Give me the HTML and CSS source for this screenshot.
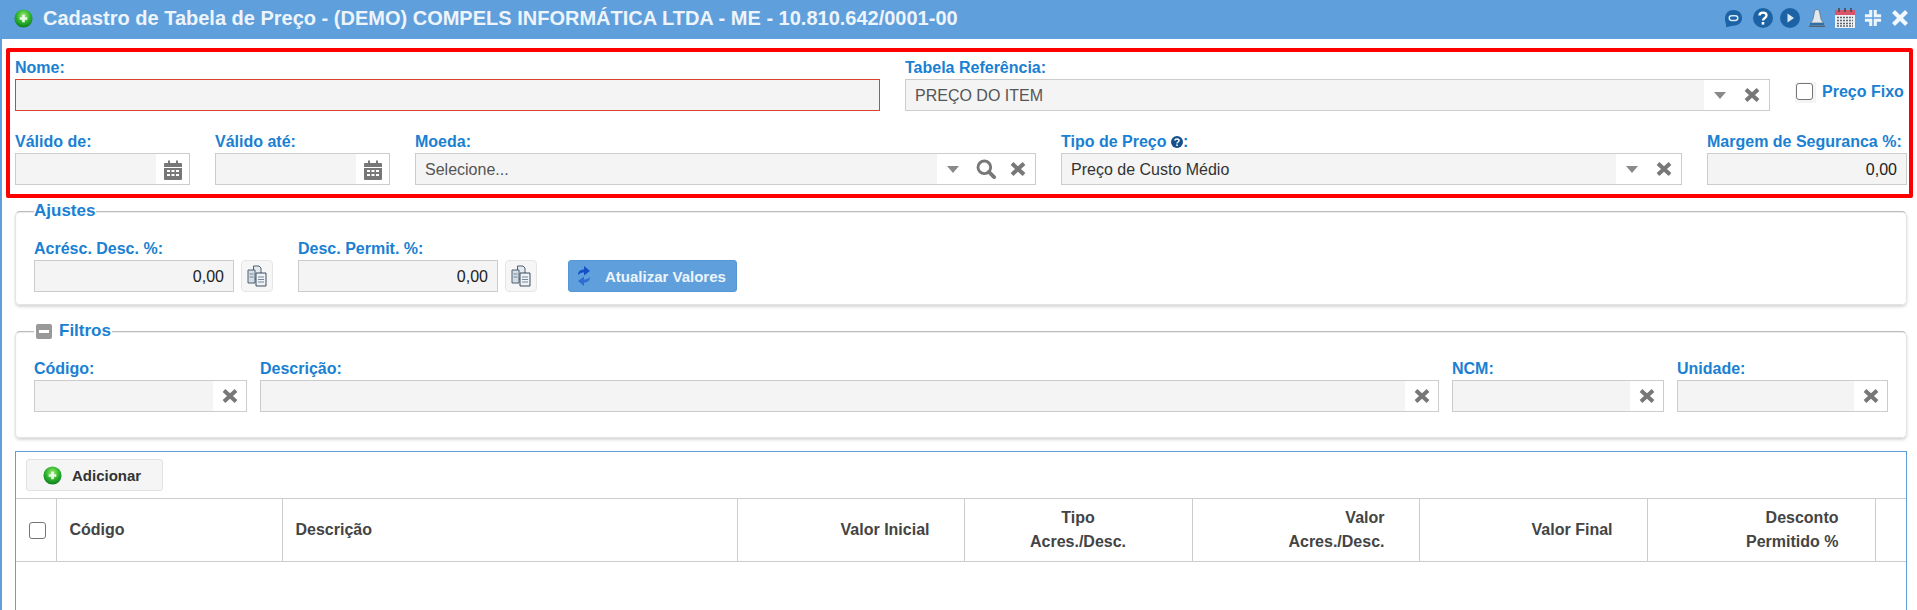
FILE: index.html
```html
<!DOCTYPE html>
<html lang="pt-BR">
<head>
  <meta charset="UTF-8" />
  <title>Cadastro de Tabela de Preço</title>
  <link rel="stylesheet" href="styles.css">
</head>
<body>

  <svg class="defs" width="0" height="0">
    <defs>
      <radialGradient id="greenBall" cx="50%" cy="35%" r="65%">
        <stop offset="0" stop-color="#a5ec74"/>
        <stop offset="0.55" stop-color="#2fb52f"/>
        <stop offset="1" stop-color="#0f7d1f"/>
      </radialGradient>
      <symbol id="icoX" viewBox="0 0 16 16">
        <path d="M2 2.500L14 13.500M14 2.500L2 13.500" stroke="#777" stroke-width="4" fill="none"/>
      </symbol>
      <symbol id="icoCaret" viewBox="0 0 12 7">
        <path d="M0 0H12L6 7Z" fill="#8a8a8a"/>
      </symbol>
      <symbol id="icoSearch" viewBox="0 0 18 18">
        <circle cx="7.500" cy="7.500" r="5.700" fill="none" stroke="#777" stroke-width="2.600"/>
        <path d="M11.600 11.600L16.300 16.300" stroke="#777" stroke-width="3.400" stroke-linecap="round"/>
      </symbol>
      <symbol id="icoCal" viewBox="0 0 18 21">
        <path d="M1 4H4V1.500H6V4H12V1.500H14V4H17Q18 4 18 5V8H0V5Q0 4 1 4Z" fill="#777"/>
        <path d="M0 9H18V20Q18 21 17 21H1Q0 21 0 20ZM3 11V13H6V11ZM7.500 11V13H10.500V11ZM12 11V13H15V11ZM3 15V17H6V15ZM7.500 15V17H10.500V15ZM12 15V17H15V15Z" fill="#777" fill-rule="evenodd"/>
      </symbol>
      <symbol id="icoPlus" viewBox="0 0 20 20">
        <circle cx="10" cy="10" r="9.500" fill="url(#greenBall)"/>
        <path d="M10 6V14M6 10H14" stroke="#e9fbe4" stroke-width="2.800"/>
      </symbol>
      <symbol id="icoCopy" viewBox="0 0 20 22">
        <path d="M6.500 1H12L14 3V14H6.500Z" fill="#e4e9ee" stroke="#4f5f70"/>
        <path d="M1 5H8V18H1Z" fill="#d4dde6" stroke="#4f5f70"/>
        <path d="M9 8H19V21H9Z" fill="#eef2f5" stroke="#3d4d5f"/>
        <path d="M11 12H17M11 14.500H17M11 17H17M2.500 9H6.500M2.500 12H6.500" stroke="#75879a"/>
      </symbol>
    </defs>
  </svg>

  <div class="window">

    <div class="titlebar">
      <svg class="title-ico"><use href="#icoPlus"/></svg>
      <h1 class="title">Cadastro de Tabela de Preço - (DEMO) COMPELS INFORMÁTICA LTDA - ME - 10.810.642/0001-00</h1>
      <div class="title-tools">
        <svg class="tool tool-chat" viewBox="0 0 20 20">
          <path d="M10 1C15 1 19 4 19 9.500C19 14.500 15 17.500 10 17.500C7 17.500 3.500 19 2 19C3 17 1 14 1 10C1 4.500 5 1 10 1Z" fill="#1c63a6"/>
          <rect x="5.500" y="7" width="9" height="5" rx="2.500" fill="none" stroke="#dbe9f6" stroke-width="1.600"/>
        </svg>
        <svg class="tool tool-help" viewBox="0 0 20 20">
          <circle cx="10" cy="10" r="10" fill="#1c63a6"/>
          <path d="M6.500 7.500C6.500 3.600 13.500 3.600 13.500 7.500C13.500 10 10 10 10 12.500" fill="none" stroke="#fff" stroke-width="2.400"/>
          <rect x="8.700" y="14" width="2.600" height="2.600" fill="#fff"/>
        </svg>
        <svg class="tool tool-play" viewBox="0 0 20 20">
          <circle cx="10" cy="10" r="10" fill="#1c63a6"/>
          <path d="M7.500 5.500L14 10L7.500 14.500Z" fill="#dbe9f6"/>
        </svg>
        <svg class="tool tool-bell" viewBox="0 0 18 20">
          <path d="M9 1.500C11 1.500 11.500 3 12 6C12.500 10 13.500 13 15.500 15H2.500C4.500 13 5.500 10 6 6C6.500 3 7 1.500 9 1.500Z" fill="#e2e8ee" stroke="#5f7385" stroke-width="0.800"/>
          <path d="M2 15H16V17H2Z" fill="#2f6fa8"/>
          <path d="M1 17.500H17V19H1Z" fill="#55626d"/>
        </svg>
        <svg class="tool tool-cal" viewBox="0 0 20 20">
          <rect x="0" y="2" width="20" height="5" fill="#d9546a"/>
          <rect x="0" y="7" width="20" height="13" fill="#eef0f3"/>
          <path d="M4 0V4M10 0V4M16 0V4" stroke="#444" stroke-width="1.500"/>
          <path d="M2 9.500H18M2 12.500H18M2 15.500H18M2 18H18" stroke="#5c6670" stroke-width="1.600" stroke-dasharray="2 1"/>
        </svg>
        <svg class="tool tool-min" viewBox="0 0 20 20">
          <path d="M7.500 1V7.500H1M12.500 1V7.500H19M7.500 19V12.500H1M12.500 19V12.500H19" fill="none" stroke="#eef5fc" stroke-width="3.400"/>
        </svg>
        <svg class="tool tool-close" viewBox="0 0 18 18">
          <path d="M2.500 2.500L15.500 15.500M15.500 2.500L2.500 15.500" stroke="#f2f8fd" stroke-width="4.200"/>
        </svg>
      </div>
    </div>

    <!-- cabecalho -->
    <div class="mark-box">
      <div class="row row-top">
        <div class="field">
          <label class="lbl">Nome:</label>
          <div class="ctl ctl-error"><div class="val"></div></div>
        </div>
        <div class="field">
          <label class="lbl">Tabela Referência:</label>
          <div class="ctl">
            <div class="val val-muted">PREÇO DO ITEM</div>
            <div class="addon addon-2">
              <svg class="i-caret"><use href="#icoCaret"/></svg>
              <svg class="i-x"><use href="#icoX"/></svg>
            </div>
          </div>
        </div>
        <div class="fixed-check">
          <span class="check-wrap"><input type="checkbox" class="check"></span>
          <span class="lbl-check">Preço Fixo</span>
        </div>
      </div>
      <div class="row row-bottom">
        <div class="field">
          <label class="lbl">Válido de:</label>
          <div class="ctl">
            <div class="val"></div>
            <div class="addon addon-1"><svg class="i-cal"><use href="#icoCal"/></svg></div>
          </div>
        </div>
        <div class="field">
          <label class="lbl">Válido até:</label>
          <div class="ctl">
            <div class="val"></div>
            <div class="addon addon-1"><svg class="i-cal"><use href="#icoCal"/></svg></div>
          </div>
        </div>
        <div class="field">
          <label class="lbl">Moeda:</label>
          <div class="ctl">
            <div class="val val-muted">Selecione...</div>
            <div class="addon addon-3">
              <svg class="i-caret"><use href="#icoCaret"/></svg>
              <svg class="i-search"><use href="#icoSearch"/></svg>
              <svg class="i-x"><use href="#icoX"/></svg>
            </div>
          </div>
        </div>
        <div class="field">
          <label class="lbl">Tipo de Preço
            <svg class="i-help" viewBox="0 0 12 12">
              <circle cx="6" cy="6" r="6" fill="#14508c"/>
              <path d="M3.900 4.600C3.900 2.300 8.100 2.300 8.100 4.600C8.100 6 6 6 6 7.400" fill="none" stroke="#fff" stroke-width="1.500"/>
              <rect x="5.200" y="8.400" width="1.600" height="1.600" fill="#fff"/>
            </svg>:</label>
          <div class="ctl">
            <div class="val">Preço de Custo Médio</div>
            <div class="addon addon-2">
              <svg class="i-caret"><use href="#icoCaret"/></svg>
              <svg class="i-x"><use href="#icoX"/></svg>
            </div>
          </div>
        </div>
        <div class="field">
          <label class="lbl">Margem de Seguranca %:</label>
          <div class="ctl"><div class="val val-num">0,00</div></div>
        </div>
      </div>
    </div>

    <!-- ajustes -->
    <fieldset class="group group-adjust">
      <legend class="group-title">Ajustes</legend>
      <div class="row-adjust">
        <div class="field field-adjust">
          <label class="lbl">Acrésc. Desc. %:</label>
          <div class="ctl"><div class="val val-num">0,00</div></div>
        </div>
        <button class="btn-copy"><svg class="i-copy"><use href="#icoCopy"/></svg></button>
        <div class="field field-adjust">
          <label class="lbl">Desc. Permit. %:</label>
          <div class="ctl"><div class="val val-num">0,00</div></div>
        </div>
        <button class="btn-copy"><svg class="i-copy"><use href="#icoCopy"/></svg></button>
        <button class="btn-update">
          <svg class="i-refresh" viewBox="0 0 16 22">
            <path d="M2 10C2 6 5 4.500 8 4.500V1L14 6L8 10.500V7.500C6 7.500 4 8 2 10Z" fill="#1450c8"/>
            <path d="M14 12C14 16 11 17.500 8 17.500V21L2 16L8 11.500V14.500C10 14.500 12 14 14 12Z" fill="#2f6bd0"/>
          </svg>
          Atualizar Valores
        </button>
      </div>
    </fieldset>

    <!-- filtros -->
    <fieldset class="group group-filter">
      <legend class="group-title">
        <span class="i-minus"></span>Filtros
      </legend>
      <div class="row row-filter">
        <div class="field">
          <label class="lbl">Código:</label>
          <div class="ctl">
            <div class="val"></div>
            <div class="addon addon-1"><svg class="i-x"><use href="#icoX"/></svg></div>
          </div>
        </div>
        <div class="field">
          <label class="lbl">Descrição:</label>
          <div class="ctl">
            <div class="val"></div>
            <div class="addon addon-1"><svg class="i-x"><use href="#icoX"/></svg></div>
          </div>
        </div>
        <div class="field">
          <label class="lbl">NCM:</label>
          <div class="ctl">
            <div class="val"></div>
            <div class="addon addon-1"><svg class="i-x"><use href="#icoX"/></svg></div>
          </div>
        </div>
        <div class="field">
          <label class="lbl">Unidade:</label>
          <div class="ctl">
            <div class="val"></div>
            <div class="addon addon-1"><svg class="i-x"><use href="#icoX"/></svg></div>
          </div>
        </div>
      </div>
    </fieldset>

    <!-- grid -->
    <div class="grid-box">
      <div class="grid-tools">
        <button class="btn-add"><svg class="i-plus"><use href="#icoPlus"/></svg>Adicionar</button>
      </div>
      <table class="grid">
        <colgroup>
          <col class="c-check"><col class="c-code"><col class="c-desc"><col class="c-val">
          <col class="c-val2"><col class="c-val"><col class="c-val2"><col class="c-disc"><col>
        </colgroup>
        <tr>
          <th class="th-check"><input type="checkbox" class="check"></th>
          <th>Código</th>
          <th>Descrição</th>
          <th class="right">Valor Inicial</th>
          <th class="center">Tipo<br>Acres./Desc.</th>
          <th class="right">Valor<br>Acres./Desc.</th>
          <th class="right">Valor Final</th>
          <th class="right th-disc">Desconto<br>Permitido %</th>
          <th></th>
        </tr>
      </table>
    </div>

  </div>
</body>
</html>
```

FILE: styles.css
```css
html, body {
  margin: 0;
  padding: 0;
  height: 100%;
  overflow: hidden;
  background-color: #fff;
}
body {
  font-family: "Liberation Sans", Arial, sans-serif;
  font-size: 16px;
  color: #333;
}
.defs {
  display: block;
  height: 0;
}
.window {
  border-left: 2px solid #5fa0dc;
  height: 100%;
  box-sizing: border-box;
  overflow: hidden;
}

/* barra de titulo */
.titlebar {
  display: flex;
  align-items: center;
  height: 39px;
  padding-left: 12px;
  background-color: #5fa0dc;
}
.title-ico {
  width: 19px;
  height: 19px;
  flex: none;
  margin-bottom: 3px;
}
.title {
  margin: 0 0 3px 10px;
  font-size: 20px;
  font-weight: bold;
  color: #eef4fb;
  white-space: nowrap;
}
.title-tools {
  display: flex;
  align-items: center;
  margin-left: auto;
  margin-right: 8px;
  padding-bottom: 3px;
}
.tool { display: block; flex: none; }
.tool-chat { width: 19px; height: 19px; }
.tool-help { width: 20px; height: 20px; margin-left: 10px; }
.tool-play { width: 20px; height: 20px; margin-left: 7px; }
.tool-bell { width: 18px; height: 20px; margin-left: 8px; }
.tool-cal { width: 20px; height: 20px; margin-left: 9px; }
.tool-min { width: 20px; height: 18px; margin-left: 8px; }
.tool-close { width: 18px; height: 18px; margin-left: 8px; }

/* campos */
.row { display: grid; }
.field { min-width: 0; }
.lbl {
  display: block;
  height: 21px;
  line-height: 20px;
  font-weight: bold;
  color: #1a80d2;
  white-space: nowrap;
}
.ctl {
  display: flex;
  height: 32px;
  box-sizing: border-box;
  border: 1px solid #ccc;
  background-color: #fff;
}
.ctl-error { border-color: #d9432f; }
.val {
  flex: 1;
  min-width: 0;
  padding: 0 9px;
  line-height: 32px;
  background-color: #f4f4f4;
  color: #333;
  white-space: nowrap;
}
.val-muted { color: #555; }
.val-num {
  text-align: right;
  color: #222;
}
.addon {
  display: flex;
  align-items: center;
  flex: none;
  background-color: #fff;
}
.addon-1 { width: 33px; justify-content: center; }
.addon-2 { width: 65px; padding-left: 10px; box-sizing: border-box; }
.addon-3 { width: 98px; padding-left: 10px; box-sizing: border-box; }
.addon-2 .i-x { margin-left: 18px; }
.addon-3 .i-search { margin-left: 17px; }
.addon-3 .i-x { margin-left: 14px; }
.i-x { width: 16px; height: 16px; }
.i-caret { width: 12px; height: 7px; }
.i-search { width: 20px; height: 20px; }
.i-cal { width: 18px; height: 21px; }
.i-help { width: 12px; height: 12px; vertical-align: -1px; }

.check {
  appearance: none;
  display: block;
  width: 17px;
  height: 17px;
  margin: 0;
  border: 1px solid #767676;
  border-radius: 3px;
  background-color: #fff;
}

/* area marcada */
.mark-box {
  margin: 9px 4px 0;
  padding: 6px 2px 9px 5px;
  border: 4px solid #f00;
  border-radius: 2px;
}
.row-top {
  grid-template-columns: 865px 865px 1fr;
  column-gap: 25px;
}
.row-bottom {
  grid-template-columns: 175px 175px 621px 621px 1fr;
  column-gap: 25px;
  margin-top: 21px;
}
.fixed-check {
  display: flex;
  align-items: center;
  height: 24px;
  margin-top: 22px;
}
.check-wrap {
  padding: 1px 3px 3px 1px;
  background-color: #f4f4f4;
}
.lbl-check {
  margin-left: 6px;
  font-weight: bold;
  color: #1a80d2;
  white-space: nowrap;
}

/* grupos */
.group {
  min-width: 0;
  margin: 3px 10px 0 13px;
  padding: 18px 17px 12px 18px;
  border: 1px solid #e4e4e4;
  border-top-color: #bbb;
  border-radius: 5px;
  box-shadow: 0 2px 3px rgba(0, 0, 0, 0.16), inset 0 1px 1px rgba(0, 0, 0, 0.08);
}
.group-filter {
  margin-top: 16px;
  padding-bottom: 25px;
}
.group-title {
  display: flex;
  align-items: center;
  height: 20px;
  margin-left: 0;
  padding: 0 1px;
  background-color: #fff;
  font-size: 17px;
  font-weight: bold;
  color: #1a80d2;
}
.group-adjust .group-title { padding-left: 0; }
.i-minus {
  position: relative;
  flex: none;
  width: 16px;
  height: 15px;
  margin: 0 7px 0 1px;
  border-radius: 2px;
  background-color: #999;
}
.i-minus::after {
  content: "";
  position: absolute;
  left: 3px;
  right: 3px;
  top: 6px;
  height: 3px;
  background-color: #fff;
}
.row-adjust {
  display: flex;
  align-items: flex-end;
}
.field-adjust { width: 200px; }
.btn-copy {
  flex: none;
  width: 32px;
  height: 32px;
  margin: 0 25px 0 7px;
  padding: 0;
  border: 1px solid #e6e6e6;
  border-radius: 4px;
  background-color: #f6f6f6;
}
.i-copy {
  display: block;
  width: 20px;
  height: 22px;
  margin: 0 auto;
}
.btn-update {
  display: flex;
  align-items: center;
  flex: none;
  width: 169px;
  height: 32px;
  margin-left: 6px;
  padding: 0 0 0 7px;
  border: 1px solid #5596d4;
  border-radius: 3px;
  background-color: #5fa0dc;
  font: bold 15px "Liberation Sans", Arial, sans-serif;
  color: #eef4fb;
  white-space: nowrap;
}
.i-refresh {
  flex: none;
  width: 16px;
  height: 22px;
  margin-right: 13px;
}
.row-filter {
  grid-template-columns: 213px 1179px 212px 211px;
  column-gap: 13px;
}

/* grid */
.grid-box {
  height: 200px;
  margin: 13px 10px 0 13px;
  border: 1px solid #5fa0dc;
}
.grid-tools {
  padding: 7px 10px;
}
.btn-add {
  display: flex;
  align-items: center;
  width: 137px;
  height: 32px;
  padding: 0 0 0 16px;
  border: 1px solid #e2e2e2;
  border-radius: 3px;
  background-color: #f5f5f5;
  font: bold 15px "Liberation Sans", Arial, sans-serif;
  color: #333;
}
.i-plus {
  width: 19px;
  height: 19px;
  margin-right: 10px;
}
.grid {
  table-layout: fixed;
  width: 100%;
  border-collapse: collapse;
}
.c-check { width: 40px; }
.c-code { width: 226px; }
.c-desc { width: 455px; }
.c-val { width: 227px; }
.c-val2 { width: 228px; }
.c-disc { width: 228px; }
.grid th {
  height: 63px;
  box-sizing: border-box;
  padding: 0 34px 0 13px;
  border: 1px solid #ccc;
  font-size: 16px;
  line-height: 24px;
  font-weight: bold;
  color: #444;
  text-align: left;
}
.grid th:first-child { border-left: none; }
.grid th:last-child { border-right: none; }
.grid th.right { text-align: right; }
.grid th.center { padding: 0; text-align: center; }
.grid th.th-check { padding: 0 0 0 13px; }
.grid th.th-disc { padding-right: 36px; }
```
